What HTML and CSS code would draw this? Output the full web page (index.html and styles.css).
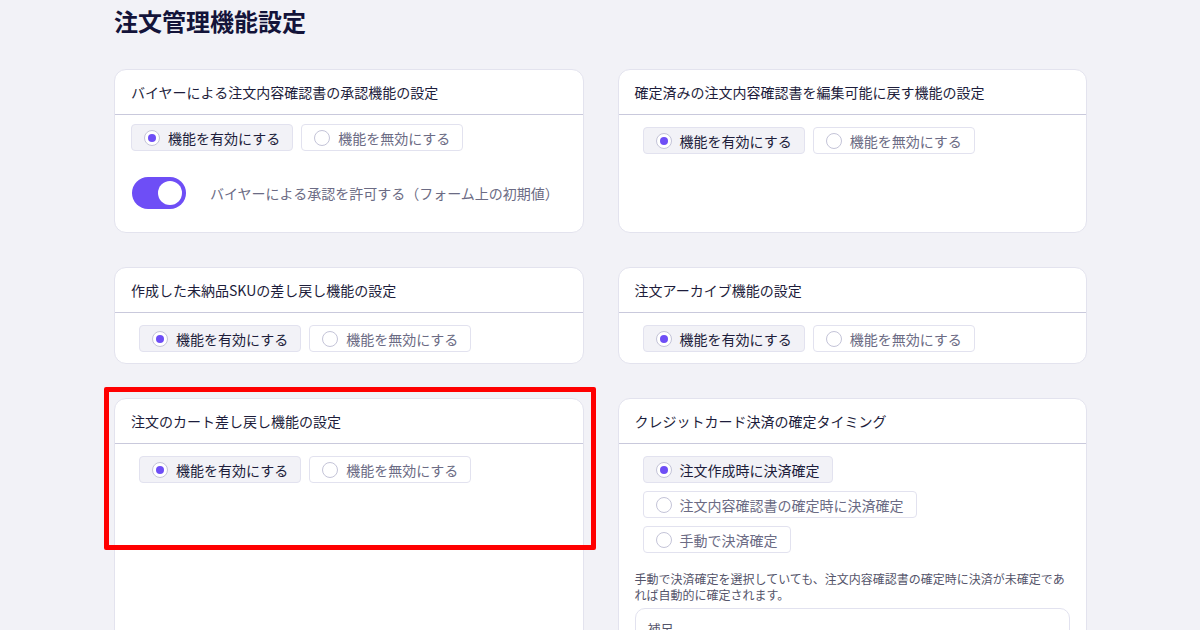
FILE: index.html
```html
<!DOCTYPE html>
<html lang="ja">
<head>
    <meta charset="UTF-8">
    <meta name="viewport" content="width=device-width, initial-scale=1.0">
    <title>注文管理機能設定</title>
    <link rel="stylesheet" href="styles.css">
</head>
<body>
    <div class="page">
        <h1>注文管理機能設定</h1>

        <div class="settings-grid">
            <!-- バイヤー承認 -->
            <div class="card">
                <div class="card-header">バイヤーによる注文内容確認書の承認機能の設定</div>
                <div class="card-body card-body-tight">
                    <div class="radio-group">
                        <label class="radio-btn checked"><span class="radio-dot"></span>機能を有効にする</label>
                        <label class="radio-btn"><span class="radio-dot"></span>機能を無効にする</label>
                    </div>
                    <div class="toggle-row">
                        <span class="toggle on"><span class="toggle-knob"></span></span>
                        <span class="toggle-label">バイヤーによる承認を許可する（フォーム上の初期値）</span>
                    </div>
                </div>
            </div>

            <!-- 確定済みを戻す -->
            <div class="card">
                <div class="card-header">確定済みの注文内容確認書を編集可能に戻す機能の設定</div>
                <div class="card-body">
                    <div class="radio-group">
                        <label class="radio-btn checked"><span class="radio-dot"></span>機能を有効にする</label>
                        <label class="radio-btn"><span class="radio-dot"></span>機能を無効にする</label>
                    </div>
                </div>
            </div>

            <!-- 未納品SKU -->
            <div class="card">
                <div class="card-header">作成した未納品SKUの差し戻し機能の設定</div>
                <div class="card-body">
                    <div class="radio-group">
                        <label class="radio-btn checked"><span class="radio-dot"></span>機能を有効にする</label>
                        <label class="radio-btn"><span class="radio-dot"></span>機能を無効にする</label>
                    </div>
                </div>
            </div>

            <!-- アーカイブ -->
            <div class="card">
                <div class="card-header">注文アーカイブ機能の設定</div>
                <div class="card-body">
                    <div class="radio-group">
                        <label class="radio-btn checked"><span class="radio-dot"></span>機能を有効にする</label>
                        <label class="radio-btn"><span class="radio-dot"></span>機能を無効にする</label>
                    </div>
                </div>
            </div>

            <!-- カート差し戻し -->
            <div class="card highlighted">
                <div class="card-header">注文のカート差し戻し機能の設定</div>
                <div class="card-body">
                    <div class="radio-group">
                        <label class="radio-btn checked"><span class="radio-dot"></span>機能を有効にする</label>
                        <label class="radio-btn"><span class="radio-dot"></span>機能を無効にする</label>
                    </div>
                </div>
                <div class="highlight-frame"></div>
            </div>

            <!-- クレジットカード -->
            <div class="card">
                <div class="card-header">クレジットカード決済の確定タイミング</div>
                <div class="card-body">
                    <div class="radio-group stacked">
                        <label class="radio-btn checked"><span class="radio-dot"></span>注文作成時に決済確定</label>
                        <label class="radio-btn"><span class="radio-dot"></span>注文内容確認書の確定時に決済確定</label>
                        <label class="radio-btn"><span class="radio-dot"></span>手動で決済確定</label>
                    </div>
                    <p class="help-text">手動で決済確定を選択していても、注文内容確認書の確定時に決済が未確定であれば自動的に確定されます。</p>
                    <div class="note-box">
                        <div class="note-label">補足</div>
                        <div class="note-input"></div>
                    </div>
                </div>
            </div>
        </div>
    </div>
</body>
</html>
```

FILE: styles.css
```css
body {
    font-family: "Noto Sans CJK JP", "Noto Sans", sans-serif;
    background-color: #f2f2f7;
    color: #1d1d3b;
    margin: 0;
    height: 630px;
    overflow: hidden;
}

.page {
    width: 973px;
    margin-left: 114px;
    padding-top: 3px;
}

h1 {
    font-size: 24px;
    line-height: 36px;
    font-weight: 700;
    color: #14143a;
    margin: 0 0 30px;
}

.settings-grid {
    display: grid;
    grid-template-columns: 1fr 1fr;
    gap: 34px;
}

.card {
    background-color: #ffffff;
    border: 1px solid #e3e3ee;
    border-radius: 12px;
}

.card-header {
    font-size: 14px;
    line-height: 20px;
    padding: 12px 16px;
    border-bottom: 1px solid #c9c9dc;
    color: #1d1d3b;
}

.card-body {
    padding: 12px 16px 11px;
}

.card-body-tight {
    padding: 9px 16px 23px;
}

.card-body .radio-group {
    margin-left: 8px;
}

.card-body-tight .radio-group {
    margin-left: 0;
}

/* Radio buttons */
.radio-group {
    display: flex;
    gap: 8px;
}

.radio-group.stacked {
    flex-direction: column;
    align-items: flex-start;
}

.radio-btn {
    display: flex;
    align-items: center;
    gap: 8px;
    height: 27px;
    box-sizing: border-box;
    padding: 0 12px;
    border: 1px solid #e2e2ef;
    border-radius: 4px;
    font-size: 14px;
    color: #6b6b84;
    background-color: #ffffff;
}

.radio-btn.checked {
    background-color: #f2f2f7;
    color: #1d1d3b;
}

.radio-dot {
    width: 16px;
    height: 16px;
    box-sizing: border-box;
    border: 1px solid #c4c4d8;
    border-radius: 50%;
    background-color: #ffffff;
    display: flex;
    align-items: center;
    justify-content: center;
}

.radio-btn.checked .radio-dot::after {
    content: "";
    width: 8px;
    height: 8px;
    border-radius: 50%;
    background-color: #6e4ef6;
}

/* Toggle */
.toggle-row {
    display: flex;
    align-items: center;
    gap: 24px;
    margin-top: 26px;
    padding-left: 1px;
}

.toggle {
    width: 54px;
    height: 32px;
    border-radius: 16px;
    background-color: #6e4ef6;
    display: flex;
    align-items: center;
    justify-content: flex-end;
    padding: 0 4px;
    box-sizing: border-box;
}

.toggle-knob {
    width: 24px;
    height: 24px;
    border-radius: 50%;
    background-color: #ffffff;
}

.toggle-label {
    font-size: 14px;
    color: #6b6b84;
}

/* Help text and note */
.help-text {
    font-size: 12px;
    line-height: 16px;
    color: #54546a;
    margin: 18px 0 5px;
}

.note-box {
    border: 1px solid #e2e2ef;
    border-radius: 10px;
    padding: 10px 12px;
}

.note-label {
    font-size: 13px;
    color: #54546a;
}

.note-input {
    height: 60px;
}

/* Annotation frame */
.highlighted {
    position: relative;
}

.highlight-frame {
    position: absolute;
    top: -12px;
    left: -11px;
    right: -13px;
    height: 163px;
    border: 5px solid #ff0000;
    box-sizing: border-box;
    border-radius: 2px;
}
```
